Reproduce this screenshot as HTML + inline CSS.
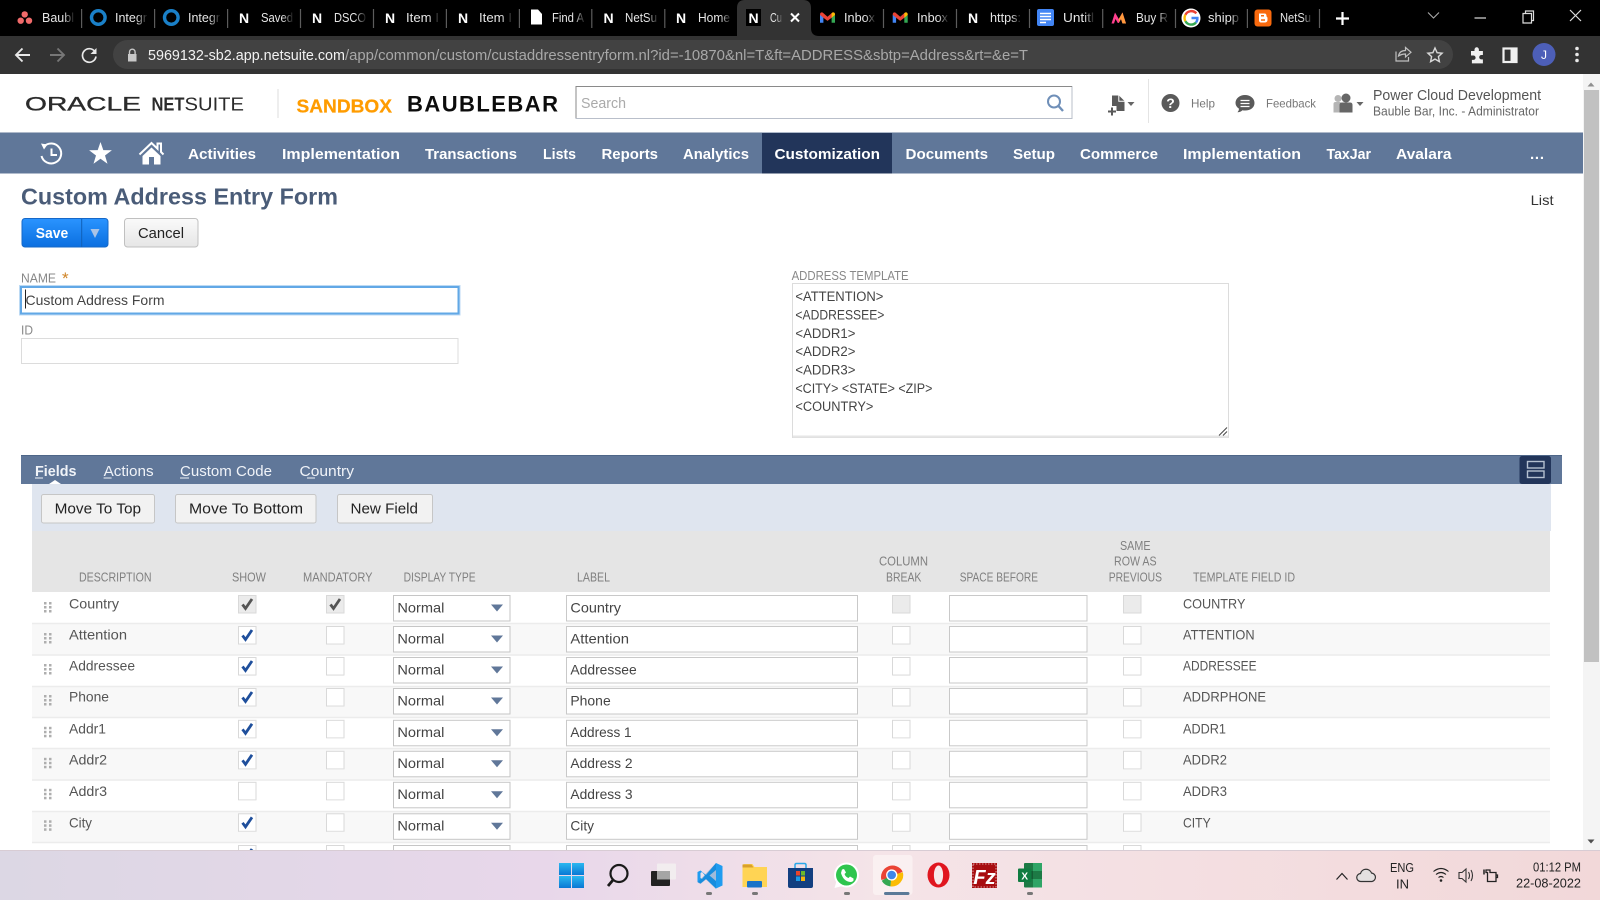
<!DOCTYPE html>
<html lang="en">
<head>
<meta charset="utf-8">
<title>Custom Address Entry Form</title>
<style>
html,body{margin:0;padding:0;width:1600px;height:900px;overflow:hidden;background:#fff}
svg{display:block}
text{font-family:"Liberation Sans",sans-serif;white-space:pre}
.tab{font-size:13px;fill:#e6e6e6}
.n{font-size:14px;font-weight:700;fill:#fff;text-anchor:middle}
.nav{font-size:15px;font-weight:700;fill:#fff}
.h{font-size:12.5px;fill:#808080}
.d{font-size:14px;fill:#555}
.v{font-size:14px;fill:#444}
.ta{font-size:13.5px;fill:#444}
.st{font-size:15px;fill:#f0f3f8}
.b{font-size:15px;fill:#222}
.tr{font-size:12.5px;fill:#222}
</style>
</head>
<body>
<svg xmlns="http://www.w3.org/2000/svg" width="1600" height="900" viewBox="0 0 1600 900">
<defs>
<linearGradient id="fade"><stop offset="0" stop-color="#000" stop-opacity="0"/><stop offset="1" stop-color="#000"/></linearGradient>
<linearGradient id="fadeA"><stop offset="0" stop-color="#333" stop-opacity="0"/><stop offset="1" stop-color="#333"/></linearGradient>
<linearGradient id="tb" x1="0" x2="1" y1="0" y2="0"><stop offset="0" stop-color="#dcd7e4"/><stop offset=".34" stop-color="#e8d7ea"/><stop offset=".55" stop-color="#f5e4e8"/><stop offset="1" stop-color="#f2d8d9"/></linearGradient>
<linearGradient id="sv" x1="0" x2="0" y1="0" y2="1"><stop offset="0" stop-color="#2a94ff"/><stop offset="1" stop-color="#0b6fe0"/></linearGradient>
<linearGradient id="cn" x1="0" x2="0" y1="0" y2="1"><stop offset="0" stop-color="#fafafa"/><stop offset="1" stop-color="#e6e6e6"/></linearGradient>
<linearGradient id="win" x1="0" x2="0" y1="0" y2="1"><stop offset="0" stop-color="#2ab8f0"/><stop offset="1" stop-color="#0a78d4"/></linearGradient>
<clipPath id="pg"><rect x="0" y="74" width="1600" height="776"/></clipPath>
<g id="cb"><rect x=".5" y=".5" width="17.5" height="17.5" fill="#fff" stroke="#d9d9d9"/><path d="M1 18.2h17" stroke="#e4e4e4"/></g>
<g id="cbd"><rect x=".5" y=".5" width="17.5" height="17.5" fill="#ebebeb" stroke="#d9d9d9"/></g>
<path id="ck" d="M4.5 9.5l3 4 6.5-9.5" fill="none" stroke-width="2.8"/>
<g id="dots" fill="#aeaeae"><rect x="44" y="0" width="2.5" height="2.5"/><rect x="49" y="0" width="2.5" height="2.5"/><rect x="44" y="4" width="2.5" height="2.5"/><rect x="49" y="4" width="2.5" height="2.5"/><rect x="44" y="8" width="2.5" height="2.5"/><rect x="49" y="8" width="2.5" height="2.5"/></g>
<g id="row">
<use href="#dots" y="7"/>
<rect x="393.5" y=".5" width="116.5" height="25.5" fill="#fff" stroke="#c6c6c6"/>
<path d="M491 9.5h12l-6 7z" fill="#607799"/>
<rect x="566.5" y=".5" width="291" height="25.5" fill="#fff" stroke="#c9c9c9"/>
<rect x="949.5" y=".5" width="137.5" height="25.5" fill="#fff" stroke="#c9c9c9"/>
<text class="v" x="397.4" y="17.4" textLength="47" lengthAdjust="spacingAndGlyphs">Normal</text>
</g>
</defs>

<!-- chrome -->
<rect width="1600" height="36" fill="#000"/>
<rect y="36" width="1600" height="38" fill="#333"/>
<path d="M737 36V8q0-8 8-8h58q8 0 8 8v20q0 8 8 8z" fill="#333"/>
<rect x="113" y="40" width="1340" height="29" rx="14.5" fill="#424242"/>
<g stroke="#5c5c5c" stroke-width="1.2">
<path d="M81.6 9v19M154.6 9v19M227.6 9v19M300.5 9v19M373.5 9v19M446.4 9v19M519.4 9v19M591.8 9v19M664.8 9v19M883.5 9v19M956.5 9v19M1029.5 9v19M1102.7 9v19M1175.5 9v19M1247.4 9v19M1319.5 9v19"/>
</g>
<g fill="#f06a6a"><circle cx="24.7" cy="14.4" r="3.2"/><circle cx="20.7" cy="20.7" r="3.2"/><circle cx="29" cy="20.7" r="3.2"/></g>
<circle cx="98.3" cy="17.5" r="6.8" fill="none" stroke="#1a80c8" stroke-width="3.4"/>
<circle cx="171.3" cy="17.5" r="6.8" fill="none" stroke="#1a80c8" stroke-width="3.4"/>
<text class="n" x="244" y="23">N</text>
<text class="n" x="317" y="23">N</text>
<text class="n" x="390" y="23">N</text>
<text class="n" x="463" y="23">N</text>
<path d="M531 9.5h7l4 4.5v10.5h-11z" fill="#fff"/>
<text class="n" x="608.5" y="23">N</text>
<text class="n" x="681" y="23">N</text>
<rect x="746" y="9" width="15" height="17" fill="#000"/>
<text class="n" x="753.5" y="23">N</text>
<text class="n" x="973" y="23">N</text>
<g class="tabs">
<text class="tab" x="42" y="22" textLength="32" lengthAdjust="spacingAndGlyphs">Baubl</text>
<text class="tab" x="115" y="22" textLength="32" lengthAdjust="spacingAndGlyphs">Integr</text>
<text class="tab" x="188" y="22" textLength="32" lengthAdjust="spacingAndGlyphs">Integr</text>
<text class="tab" x="261" y="22" textLength="32" lengthAdjust="spacingAndGlyphs">Saved</text>
<text class="tab" x="334" y="22" textLength="32" lengthAdjust="spacingAndGlyphs">DSCO</text>
<text class="tab" x="406" y="22" textLength="33" lengthAdjust="spacingAndGlyphs">Item I</text>
<text class="tab" x="479" y="22" textLength="33" lengthAdjust="spacingAndGlyphs">Item I</text>
<text class="tab" x="552" y="22" textLength="32" lengthAdjust="spacingAndGlyphs">Find A</text>
<text class="tab" x="625" y="22" textLength="32" lengthAdjust="spacingAndGlyphs">NetSu</text>
<text class="tab" x="698" y="22" textLength="32" lengthAdjust="spacingAndGlyphs">Home</text>
<text class="tab" x="844" y="22" textLength="31" lengthAdjust="spacingAndGlyphs">Inbox</text>
<text class="tab" x="917" y="22" textLength="31" lengthAdjust="spacingAndGlyphs">Inbox</text>
<text class="tab" x="990" y="22" textLength="31" lengthAdjust="spacingAndGlyphs">https:</text>
<text class="tab" x="1063" y="22" textLength="31" lengthAdjust="spacingAndGlyphs">Untitl</text>
<text class="tab" x="1136" y="22" textLength="32" lengthAdjust="spacingAndGlyphs">Buy R</text>
<text class="tab" x="1208" y="22" textLength="31" lengthAdjust="spacingAndGlyphs">shipp</text>
<text class="tab" x="1280" y="22" textLength="31" lengthAdjust="spacingAndGlyphs">NetSu</text>
</g>
<g fill="url(#fade)">
<rect x="63" y="8" width="12" height="20"/><rect x="136" y="8" width="12" height="20"/><rect x="209" y="8" width="12" height="20"/><rect x="282" y="8" width="12" height="20"/><rect x="355" y="8" width="12" height="20"/><rect x="428" y="8" width="12" height="20"/><rect x="501" y="8" width="12" height="20"/><rect x="574" y="8" width="12" height="20"/><rect x="647" y="8" width="12" height="20"/><rect x="720" y="8" width="12" height="20"/><rect x="865" y="8" width="11" height="20"/><rect x="938" y="8" width="11" height="20"/><rect x="1011" y="8" width="11" height="20"/><rect x="1084" y="8" width="11" height="20"/><rect x="1158" y="8" width="11" height="20"/><rect x="1230" y="8" width="11" height="20"/><rect x="1302" y="8" width="11" height="20"/>
</g>
<text class="tab" x="770" y="22" textLength="12" lengthAdjust="spacingAndGlyphs">Cu</text>
<rect x="776" y="8" width="7" height="20" fill="url(#fadeA)"/>
<path d="M791 13.5l8 8M799 13.5l-8 8" stroke="#fff" stroke-width="2"/>
<!-- gmail -->
<g transform="translate(820,11.7)"><path d="M0 3v8h3.4V5.2z" fill="#4285f4"/><path d="M15 3v8h-3.4V5.2z" fill="#34a853"/><path d="M0 3.2Q0 .2 2.6 .8L7.5 5 12.4 .8Q15 .2 15 3.2L11.6 6 7.5 9.2 3.4 6z" fill="#ea4335"/><path d="M15 3.2Q15 .2 12.4 .8L11.6 1.6v4.4z" fill="#fbbc04"/></g>
<g transform="translate(892.7,11.7)"><path d="M0 3v8h3.4V5.2z" fill="#4285f4"/><path d="M15 3v8h-3.4V5.2z" fill="#34a853"/><path d="M0 3.2Q0 .2 2.6 .8L7.5 5 12.4 .8Q15 .2 15 3.2L11.6 6 7.5 9.2 3.4 6z" fill="#ea4335"/><path d="M15 3.2Q15 .2 12.4 .8L11.6 1.6v4.4z" fill="#fbbc04"/></g>
<!-- docs -->
<rect x="1037" y="9" width="17" height="17" rx="2" fill="#4285f4"/>
<path d="M1040 13.5h11M1040 16.5h11M1040 19.5h11M1040 22.5h6" stroke="#fff" stroke-width="1.5"/>
<!-- myntra -->
<path d="M1111.500 23.500l3.500-11 3.800 6.500 3.700-6.500 3.500 11h-3.500l-1.500-4.500-2.200 4h-1l-2.300-4-1.500 4.500z" fill="#ff3f8e"/><path d="M1118.800 19l3.700-6.500 3.500 11h-3.500l-1.500-4.500-2 3.500z" fill="#ff9a3c"/>
<!-- google -->
<circle cx="1191" cy="18" r="9.5" fill="#fff"/>
<g fill="none" stroke-width="2.4"><path d="M1196.3 13.4A6.6 6.6 0 0 0 1185.4 14.8" stroke="#ea4335"/><path d="M1185.4 14.8A6.6 6.6 0 0 0 1185.4 21.2" stroke="#fbbc04"/><path d="M1185.4 21.2A6.6 6.6 0 0 0 1196 22.5" stroke="#34a853"/><path d="M1196 22.5A6.6 6.6 0 0 0 1197.4 18H1191.5" stroke="#4285f4"/></g>
<!-- blogger -->
<rect x="1254.5" y="9.5" width="17" height="17" rx="3" fill="#f96a0e"/>
<path d="M1259 13.5h5.5q2 0 2 2.5 0 1 1 1.500v2.500q0 2.500-3 2.500h-3.500q-2 0-2-2.500z" fill="#fff"/><path d="M1261 15.800h3M1261 20h4" stroke="#f96a0e" stroke-width="1.500"/>
<!-- plus and window controls -->
<path d="M1342.500 12v13M1336 18.500h13" stroke="#fff" stroke-width="2.200"/>
<path d="M1428 12.500l5.500 5.500 5.500-5.500" fill="none" stroke="#aaa" stroke-width="1.100"/>
<path d="M1474.500 18h11.500" stroke="#ddd" stroke-width="1.200"/>
<path d="M1523 13.500h8.500v9.500h-8.500zM1525.500 13.500v-2.500h8v9.500h-2" fill="none" stroke="#ddd" stroke-width="1.200"/>
<path d="M1570 10l11 11M1581 10l-11 11" stroke="#ddd" stroke-width="1.200"/>
<!-- toolbar -->
<path d="M30 55H16.500M22.500 48.500L16 55l6.500 6.500" fill="none" stroke="#e8e8e8" stroke-width="1.900"/>
<path d="M50 55h13.500M57.500 48.500L64 55l-6.500 6.500" fill="none" stroke="#777" stroke-width="1.900"/>
<path d="M94.800 51.500A6.800 6.800 0 1 0 96 56.500" fill="none" stroke="#e8e8e8" stroke-width="1.700"/><path d="M96.500 48v6H90.500z" fill="#e8e8e8"/>
<path d="M128 54h8.500v7.500H128z" fill="#c8c8c8"/><path d="M129.500 54v-2a2.800 2.800 0 0 1 5.600 0v2" fill="none" stroke="#c8c8c8" stroke-width="1.400"/>
<text x="148" y="60" font-size="14.500" fill="#f2f2f2" textLength="197" lengthAdjust="spacingAndGlyphs">5969132-sb2.app.netsuite.com</text>
<text x="345" y="60" font-size="14.500" fill="#a8a8a8" textLength="683" lengthAdjust="spacingAndGlyphs">/app/common/custom/custaddressentryform.nl?id=-10870&amp;nl=T&amp;ft=ADDRESS&amp;sbtp=Address&amp;rt=&amp;e=T</text>
<path d="M1396 51.500v9.500h12.500v-4M1398.500 56q1-5.500 7-5.500V47.500l5.500 4.800-5.500 4.700v-3q-4 0-7 2z" fill="none" stroke="#c0c0c0" stroke-width="1.200"/>
<path d="M1435 48l2.100 4.700 5 .5-3.700 3.400 1 5-4.400-2.500-4.400 2.500 1-5-3.700-3.400 5-.5z" fill="none" stroke="#d8d8d8" stroke-width="1.400"/>
<path d="M1471 51h3.500v-1.500a2.200 2.200 0 0 1 4.400 0V51h4v4h-1.500a2.200 2.200 0 0 0 0 4.400h1.500v4h-11v-3.500h1.500a2.200 2.200 0 0 0 0-4.400H1471z" fill="#f0f0f0"/>
<rect x="1503.500" y="48.500" width="13" height="13.500" fill="none" stroke="#f0f0f0" stroke-width="2.200"/><rect x="1510.500" y="48" width="6.500" height="14" fill="#f0f0f0"/>
<circle cx="1544" cy="54.500" r="11.500" fill="#4d5fb8"/>
<text x="1544" y="59" font-size="12" fill="#fff" text-anchor="middle">J</text>
<g fill="#e8e8e8"><circle cx="1577" cy="48.500" r="1.800"/><circle cx="1577" cy="54.500" r="1.800"/><circle cx="1577" cy="60.500" r="1.800"/></g>

<!-- header -->
<rect y="74" width="1600" height="58" fill="#fff"/>
<text x="25" y="110.700" font-size="19" fill="#2b2b2b" stroke="#2b2b2b" stroke-width=".35" textLength="116" lengthAdjust="spacingAndGlyphs">ORACLE</text>
<text x="151.500" y="110.700" font-size="18.500" font-weight="700" fill="#2b2b2b" textLength="33" lengthAdjust="spacingAndGlyphs">NET</text>
<text x="184.500" y="110.700" font-size="18.500" fill="#2b2b2b" textLength="59.500" lengthAdjust="spacingAndGlyphs">SUITE</text>
<path d="M278 89v29" stroke="#dcdcdc"/>
<text x="296.500" y="112.500" font-size="18" font-weight="700" fill="#ff9c00" stroke="#ff9c00" stroke-width=".25" textLength="95.500" lengthAdjust="spacingAndGlyphs">SANDBOX</text>
<text x="407" y="111.300" font-size="22" font-weight="700" fill="#0c0c0c" textLength="151" lengthAdjust="spacing">BAUBLEBAR</text>
<rect x="576" y="86.500" width="496" height="32" fill="#fff" stroke="#b9bfca"/>
<path d="M576 118V86.500h496" fill="none" stroke="#8a8a8a"/>
<text x="581" y="108" font-size="15" fill="#aaa" textLength="45" lengthAdjust="spacingAndGlyphs">Search</text>
<circle cx="1054" cy="101.500" r="6" fill="none" stroke="#6f8fb8" stroke-width="2"/><path d="M1058.500 106l4.500 5" stroke="#6f8fb8" stroke-width="2.400"/>
<path d="M1112 95.500h7l5.500 5.500v10h-8v-5h-4.500z" fill="#5a5a5a"/><path d="M1118.800 95.500v5.700h5.700" fill="none" stroke="#fff"/>
<path d="M1112 107.500v8M1108 111.500h8" stroke="#5a5a5a" stroke-width="2"/>
<path d="M1127.500 102h7l-3.500 4z" fill="#666"/>
<path d="M1148.500 79v44" stroke="#e4e4e4"/>
<circle cx="1170.500" cy="103" r="9" fill="#5a5a5a"/>
<text x="1170.500" y="108" font-size="14" font-weight="700" fill="#fff" text-anchor="middle">?</text>
<text x="1191" y="107.500" font-size="12" fill="#777" textLength="24" lengthAdjust="spacingAndGlyphs">Help</text>
<path d="M1245 95c5.500 0 9.500 3.500 9.500 8s-4 7.500-9.500 7.500q-1.500 0-2.500-.3-2 2-5 2 1.500-1.500 1.500-3.500-3.500-2.300-3.500-5.700c0-4.500 4-8 9.500-8z" fill="#5a5a5a"/>
<path d="M1240.500 100.500h9M1240.500 103.500h9M1240.500 106.500h9" stroke="#fff" stroke-width="1.300"/>
<text x="1266" y="107.500" font-size="12" fill="#777" textLength="50" lengthAdjust="spacingAndGlyphs">Feedback</text>
<circle cx="1338" cy="98.500" r="3.500" fill="#b5b5b5"/><path d="M1333.500 104q0-2 2-2h5v10.500h-7z" fill="#b5b5b5"/>
<circle cx="1346" cy="98" r="4.500" fill="#666"/><path d="M1339.500 105q0-2.500 2.500-2.500h8q2.500 0 2.500 2.500v7.500h-13z" fill="#666"/>
<path d="M1356.500 102h7l-3.500 4z" fill="#666"/>
<text x="1373" y="100" font-size="14.500" fill="#555" textLength="168" lengthAdjust="spacingAndGlyphs">Power Cloud Development</text>
<text x="1373" y="115.600" font-size="12.500" fill="#666" textLength="166" lengthAdjust="spacingAndGlyphs">Bauble Bar, Inc. - Administrator</text>

<!-- nav -->
<rect y="132" width="1583" height="41.500" fill="#607799"/>
<rect y="132" width="1583" height="1" fill="#aeb9ca"/>
<rect x="762" y="133" width="130" height="40.500" fill="#22355a"/>
<path d="M44 146.500A10 10 0 1 1 41.500 156" fill="none" stroke="#fff" stroke-width="2"/><path d="M41 143.500l6.500 1-3.500 5z" fill="#fff"/><path d="M51.500 148.500v6.500h5.500" fill="none" stroke="#fff" stroke-width="2"/>
<path d="M100.500 142l2.800 8.100 8.600.2-6.900 5.200 2.500 8.200-7-4.900-7 4.900 2.500-8.200-6.900-5.200 8.600-.2z" fill="#fff"/>
<path d="M139.500 154.500l12-11.500 6 5.700V143.500h3.500v8.500l2.500 2.500" fill="none" stroke="#fff" stroke-width="2"/>
<path d="M142.500 156l9-8.500 9 8.500v8.500h-6.500V157h-5v7.500h-6.500z" fill="#fff"/>
<g>
<text class="nav" x="188" y="159" textLength="68" lengthAdjust="spacingAndGlyphs">Activities</text>
<text class="nav" x="282" y="159" textLength="118" lengthAdjust="spacingAndGlyphs">Implementation</text>
<text class="nav" x="425" y="159" textLength="92" lengthAdjust="spacingAndGlyphs">Transactions</text>
<text class="nav" x="543" y="159" textLength="33" lengthAdjust="spacingAndGlyphs">Lists</text>
<text class="nav" x="601.500" y="159" textLength="56.500" lengthAdjust="spacingAndGlyphs">Reports</text>
<text class="nav" x="683" y="159" textLength="66" lengthAdjust="spacingAndGlyphs">Analytics</text>
<text class="nav" x="774.500" y="159" textLength="105.500" lengthAdjust="spacingAndGlyphs">Customization</text>
<text class="nav" x="905.500" y="159" textLength="82.500" lengthAdjust="spacingAndGlyphs">Documents</text>
<text class="nav" x="1013" y="159" textLength="42" lengthAdjust="spacingAndGlyphs">Setup</text>
<text class="nav" x="1080" y="159" textLength="78" lengthAdjust="spacingAndGlyphs">Commerce</text>
<text class="nav" x="1183" y="159" textLength="118" lengthAdjust="spacingAndGlyphs">Implementation</text>
<text class="nav" x="1326.500" y="159" textLength="44.500" lengthAdjust="spacingAndGlyphs">TaxJar</text>
<text class="nav" x="1396" y="159" textLength="55.500" lengthAdjust="spacingAndGlyphs">Avalara</text>
<text class="nav" x="1530" y="159" textLength="14" lengthAdjust="spacing">...</text>
</g>

<!-- title + actions -->
<text x="21" y="204.500" font-size="23" font-weight="700" fill="#4a5c78" textLength="317" lengthAdjust="spacingAndGlyphs">Custom Address Entry Form</text>
<text x="1530.600" y="205" font-size="14" fill="#333" textLength="23" lengthAdjust="spacingAndGlyphs">List</text>
<rect x="22" y="218.500" width="86" height="28.500" rx="3" fill="url(#sv)" stroke="#1668c8"/>
<path d="M81.700 219v28" stroke="#1060b8"/>
<text x="35.700" y="238" font-size="15" font-weight="700" fill="#fff" textLength="32.500" lengthAdjust="spacingAndGlyphs">Save</text>
<path d="M90.500 229h9l-4.500 9z" fill="#a9c3e6"/>
<rect x="124.500" y="218.500" width="73.500" height="28.500" rx="3" fill="url(#cn)" stroke="#c0c0c0"/>
<text class="b" x="138" y="238" textLength="46" lengthAdjust="spacingAndGlyphs">Cancel</text>

<!-- left form -->
<text x="21" y="282.700" font-size="13" fill="#888" textLength="35" lengthAdjust="spacingAndGlyphs">NAME</text>
<text x="62" y="284" font-size="17" fill="#cf8325">*</text>
<rect x="21" y="287" width="437.500" height="26.500" fill="#fff" stroke="#62a8e6" stroke-width="2"/>
<rect x="19.500" y="285.500" width="440.500" height="29.500" fill="none" stroke="#bcdaf4"/>
<path d="M25.500 289.500v19" stroke="#222"/>
<text class="v" x="25.500" y="305" textLength="139" lengthAdjust="spacingAndGlyphs">Custom Address Form</text>
<text x="21" y="334.700" font-size="13" fill="#888" textLength="12" lengthAdjust="spacingAndGlyphs">ID</text>
<rect x="21.500" y="338.500" width="436.500" height="25" fill="#fff" stroke="#dcdcdc"/>

<!-- address template -->
<text x="791.600" y="279.900" font-size="13" fill="#888" textLength="117" lengthAdjust="spacingAndGlyphs">ADDRESS TEMPLATE</text>
<rect x="792.500" y="283.500" width="436" height="154" fill="#fff" stroke="#dcdcdc"/>
<path d="M793 436.500h435" stroke="#e6e6e6" stroke-width="2"/>
<text class="ta" x="795.400" y="301.200" textLength="88" lengthAdjust="spacingAndGlyphs">&lt;ATTENTION&gt;</text>
<text class="ta" x="795.400" y="319.500" textLength="89" lengthAdjust="spacingAndGlyphs">&lt;ADDRESSEE&gt;</text>
<text class="ta" x="795.400" y="337.900" textLength="60" lengthAdjust="spacingAndGlyphs">&lt;ADDR1&gt;</text>
<text class="ta" x="795.400" y="356.200" textLength="60" lengthAdjust="spacingAndGlyphs">&lt;ADDR2&gt;</text>
<text class="ta" x="795.400" y="374.500" textLength="60" lengthAdjust="spacingAndGlyphs">&lt;ADDR3&gt;</text>
<text class="ta" x="795.400" y="392.900" textLength="137" lengthAdjust="spacingAndGlyphs">&lt;CITY&gt; &lt;STATE&gt; &lt;ZIP&gt;</text>
<text class="ta" x="795.400" y="411.200" textLength="78" lengthAdjust="spacingAndGlyphs">&lt;COUNTRY&gt;</text>
<path d="M1219 435.500l8-8M1223 435.500l4-4" stroke="#444" stroke-width="1"/>

<!-- subtabs -->
<rect x="21" y="455" width="1541" height="29" fill="#607799"/>
<rect x="21" y="455" width="1541" height="1" fill="#4e6688"/>
<text class="st" x="35" y="476" font-weight="700" textLength="41.500" lengthAdjust="spacingAndGlyphs">Fields</text>
<text class="st" x="103.600" y="476" textLength="50" lengthAdjust="spacingAndGlyphs">Actions</text>
<text class="st" x="180" y="476" textLength="92" lengthAdjust="spacingAndGlyphs">Custom Code</text>
<text class="st" x="299.500" y="476" textLength="54.500" lengthAdjust="spacingAndGlyphs">Country</text>
<path d="M35 478h8M103.600 478h8M180 478h9M307 478h8" stroke="#f0f3f8" stroke-width="1"/>
<rect x="1519.500" y="456" width="31.500" height="28" rx="2.500" fill="#22355a"/>
<rect x="1527.500" y="461.500" width="16.500" height="6.500" fill="none" stroke="#b4c0d0" stroke-width="1.400"/>
<rect x="1527.500" y="471" width="16.500" height="6.500" fill="none" stroke="#b4c0d0" stroke-width="1.400"/>

<rect x="32" y="484" width="1519" height="47" fill="#dfe5ef"/>
<path d="M49 484l6-4 6 4z" fill="#fff"/>
<rect x="41.500" y="494.500" width="113" height="28.500" rx="2" fill="#f2f2f2" stroke="#c6c6c6"/>
<rect x="175.500" y="494.500" width="140.500" height="28.500" rx="2" fill="#f2f2f2" stroke="#c6c6c6"/>
<rect x="337.500" y="494.500" width="95" height="28.500" rx="2" fill="#f2f2f2" stroke="#c6c6c6"/>
<text class="b" x="54.600" y="513.500" textLength="86.500" lengthAdjust="spacingAndGlyphs">Move To Top</text>
<text class="b" x="189" y="513.500" textLength="114" lengthAdjust="spacingAndGlyphs">Move To Bottom</text>
<text class="b" x="350.500" y="513.500" textLength="67.500" lengthAdjust="spacingAndGlyphs">New Field</text>

<!-- table header -->
<rect x="32" y="531" width="1518" height="61" fill="#e5e5e5"/>
<text class="h" x="79" y="581.700" textLength="72.500" lengthAdjust="spacingAndGlyphs">DESCRIPTION</text>
<text class="h" x="232" y="581.700" textLength="34" lengthAdjust="spacingAndGlyphs">SHOW</text>
<text class="h" x="303" y="581.700" textLength="69.500" lengthAdjust="spacingAndGlyphs">MANDATORY</text>
<text class="h" x="403.600" y="581.700" textLength="72" lengthAdjust="spacingAndGlyphs">DISPLAY TYPE</text>
<text class="h" x="577" y="581.700" textLength="33" lengthAdjust="spacingAndGlyphs">LABEL</text>
<text class="h" x="879" y="565.700" textLength="49" lengthAdjust="spacingAndGlyphs">COLUMN</text>
<text class="h" x="886" y="581.700" textLength="35.400" lengthAdjust="spacingAndGlyphs">BREAK</text>
<text class="h" x="959.700" y="581.700" textLength="78.300" lengthAdjust="spacingAndGlyphs">SPACE BEFORE</text>
<text class="h" x="1120" y="549.900" textLength="30.500" lengthAdjust="spacingAndGlyphs">SAME</text>
<text class="h" x="1114" y="565.700" textLength="42.600" lengthAdjust="spacingAndGlyphs">ROW AS</text>
<text class="h" x="1108.700" y="581.700" textLength="53.300" lengthAdjust="spacingAndGlyphs">PREVIOUS</text>
<text class="h" x="1193" y="581.700" textLength="102" lengthAdjust="spacingAndGlyphs">TEMPLATE FIELD ID</text>

<!-- rows -->
<g clip-path="url(#pg)">
<rect x="32" y="592" width="1518" height="260" fill="#fff"/>
<g fill="#f8f8f8"><rect x="32" y="624" width="1518" height="31"/><rect x="32" y="686" width="1518" height="31"/><rect x="32" y="749" width="1518" height="31"/><rect x="32" y="811" width="1518" height="31"/></g>
<path d="M32 623.500h1518M32 655h1518M32 686.500h1518M32 717.500h1518M32 748.500h1518M32 780h1518M32 811.500h1518M32 842.500h1518" stroke="#ececec" stroke-width="1.400"/>

<g transform="translate(0,595)"><use href="#row"/>
<use href="#cbd" x="238"/><use href="#ck" x="238" stroke="#555"/><use href="#cbd" x="326"/><use href="#ck" x="326" stroke="#555"/><use href="#cbd" x="892"/><use href="#cbd" x="1123"/>
<text class="d" x="69" y="13.600" textLength="50" lengthAdjust="spacingAndGlyphs">Country</text><text class="v" x="570.400" y="17.400" textLength="50.600" lengthAdjust="spacingAndGlyphs">Country</text><text class="d" x="1183" y="13.600" textLength="62.400" lengthAdjust="spacingAndGlyphs">COUNTRY</text></g>

<g transform="translate(0,626)"><use href="#row"/>
<use href="#cb" x="238"/><use href="#ck" x="238" stroke="#1f4f9c"/><use href="#cb" x="326"/><use href="#cb" x="892"/><use href="#cb" x="1123"/>
<text class="d" x="69" y="13.600" textLength="58" lengthAdjust="spacingAndGlyphs">Attention</text><text class="v" x="570.400" y="17.400" textLength="58.600" lengthAdjust="spacingAndGlyphs">Attention</text><text class="d" x="1183" y="13.600" textLength="71.600" lengthAdjust="spacingAndGlyphs">ATTENTION</text></g>

<g transform="translate(0,657)"><use href="#row"/>
<use href="#cb" x="238"/><use href="#ck" x="238" stroke="#1f4f9c"/><use href="#cb" x="326"/><use href="#cb" x="892"/><use href="#cb" x="1123"/>
<text class="d" x="69" y="13.600" textLength="66" lengthAdjust="spacingAndGlyphs">Addressee</text><text class="v" x="570.400" y="17.400" textLength="66.300" lengthAdjust="spacingAndGlyphs">Addressee</text><text class="d" x="1183" y="13.600" textLength="73.600" lengthAdjust="spacingAndGlyphs">ADDRESSEE</text></g>

<g transform="translate(0,688)"><use href="#row"/>
<use href="#cb" x="238"/><use href="#ck" x="238" stroke="#1f4f9c"/><use href="#cb" x="326"/><use href="#cb" x="892"/><use href="#cb" x="1123"/>
<text class="d" x="69" y="13.600" textLength="40" lengthAdjust="spacingAndGlyphs">Phone</text><text class="v" x="570.400" y="17.400" textLength="40.300" lengthAdjust="spacingAndGlyphs">Phone</text><text class="d" x="1183" y="13.600" textLength="83" lengthAdjust="spacingAndGlyphs">ADDRPHONE</text></g>

<g transform="translate(0,719.800)"><use href="#row"/>
<use href="#cb" x="238"/><use href="#ck" x="238" stroke="#1f4f9c"/><use href="#cb" x="326"/><use href="#cb" x="892"/><use href="#cb" x="1123"/>
<text class="d" x="69" y="13.600" textLength="37" lengthAdjust="spacingAndGlyphs">Addr1</text><text class="v" x="570.400" y="17.400" textLength="61.200" lengthAdjust="spacingAndGlyphs">Address 1</text><text class="d" x="1183" y="13.600" textLength="43" lengthAdjust="spacingAndGlyphs">ADDR1</text></g>

<g transform="translate(0,750.800)"><use href="#row"/>
<use href="#cb" x="238"/><use href="#ck" x="238" stroke="#1f4f9c"/><use href="#cb" x="326"/><use href="#cb" x="892"/><use href="#cb" x="1123"/>
<text class="d" x="69" y="13.600" textLength="38" lengthAdjust="spacingAndGlyphs">Addr2</text><text class="v" x="570.400" y="17.400" textLength="62.200" lengthAdjust="spacingAndGlyphs">Address 2</text><text class="d" x="1183" y="13.600" textLength="44" lengthAdjust="spacingAndGlyphs">ADDR2</text></g>

<g transform="translate(0,781.800)"><use href="#row"/>
<use href="#cb" x="238"/><use href="#cb" x="326"/><use href="#cb" x="892"/><use href="#cb" x="1123"/>
<text class="d" x="69" y="14.300" textLength="38" lengthAdjust="spacingAndGlyphs">Addr3</text><text class="v" x="570.400" y="17.400" textLength="62.200" lengthAdjust="spacingAndGlyphs">Address 3</text><text class="d" x="1183" y="14.300" textLength="44" lengthAdjust="spacingAndGlyphs">ADDR3</text></g>

<g transform="translate(0,813.300)"><use href="#row"/>
<use href="#cb" x="238"/><use href="#ck" x="238" stroke="#1f4f9c"/><use href="#cb" x="326"/><use href="#cb" x="892"/><use href="#cb" x="1123"/>
<text class="d" x="69" y="14" textLength="23" lengthAdjust="spacingAndGlyphs">City</text><text class="v" x="570.400" y="17.400" textLength="23.600" lengthAdjust="spacingAndGlyphs">City</text><text class="d" x="1183" y="14" textLength="27.700" lengthAdjust="spacingAndGlyphs">CITY</text></g>

<g transform="translate(0,845)"><use href="#row"/>
<use href="#cb" x="238"/><use href="#ck" x="238" stroke="#1f4f9c"/><use href="#cb" x="326"/><use href="#cb" x="892"/><use href="#cb" x="1123"/>
<text class="d" x="69" y="14.300" textLength="33" lengthAdjust="spacingAndGlyphs">State</text><text class="d" x="1183" y="14.300" textLength="36" lengthAdjust="spacingAndGlyphs">STATE</text></g>
</g>

<!-- scrollbar -->
<rect x="1583" y="74" width="17" height="776" fill="#f4f4f4"/>
<rect x="1584" y="90" width="15" height="572" fill="#c1c1c1"/>
<path d="M1587.500 86.500h7l-3.500-4z" fill="#8f8f8f"/>
<path d="M1587.500 839.500h7l-3.500 4z" fill="#505050"/>

<!-- taskbar -->
<rect y="850" width="1600" height="50" fill="url(#tb)"/>
<rect y="850" width="1600" height="1" fill="#d8ccd4"/>
<g fill="url(#win)"><rect x="559" y="863" width="12" height="12"/><rect x="572" y="863" width="12" height="12"/><rect x="559" y="876" width="12" height="12"/><rect x="572" y="876" width="12" height="12"/></g>
<circle cx="619" cy="873.500" r="8.500" fill="none" stroke="#1a1a1a" stroke-width="2.200"/><path d="M613 880l-5 6" stroke="#1a1a1a" stroke-width="2.800"/>
<rect x="651" y="871" width="19" height="15" rx="1" fill="#222"/><rect x="657" y="863.500" width="19" height="16" rx="1" fill="#f2eef0" opacity=".9"/><rect x="657" y="871" width="13" height="8.500" fill="#a5a5a5"/>
<path d="M716 863l6.500 3v19.500l-6.500 3-10-9.500-5.500 4.500-3-1.500v-10l3-1.500 5.500 4.500z" fill="#1f9cf0"/><path d="M716 870l-6.500 5.500 6.500 5.500zM702 872l-1.500 1v5l1.500 1 3-3.500z" fill="#f0e2ea"/>
<path d="M716 863v26l-10-9.500-5.500 4.500-3-1.500 18.500-19.500z" fill="#0b72bd" opacity=".35"/>
<path d="M742.500 866q0-2 2-2h8l2 3h12.500v20h-24.500z" fill="#ffd454"/><path d="M742.500 864.500h9l2 3h-11z" fill="#d9a02c"/><rect x="747" y="881" width="15" height="6.500" rx="1" fill="#1a73c8"/>
<path d="M788 868h25v18q0 2-2 2h-21q-2 0-2-2z" fill="#123f80"/><path d="M795 868v-3q0-1.500 1.500-1.500h8q1.500 0 1.500 1.500v3" fill="none" stroke="#2aa8e8" stroke-width="1.500"/>
<rect x="796" y="871" width="4" height="4.500" fill="#e8452c"/><rect x="801" y="871" width="4" height="4.500" fill="#6ab82c"/><rect x="796" y="876.500" width="4" height="4.500" fill="#1a9be8"/><rect x="801" y="876.500" width="4" height="4.500" fill="#f5b50a"/>
<circle cx="846.500" cy="875" r="12.500" fill="#fff"/><path d="M834.500 888l2-7 6 5z" fill="#fff"/>
<circle cx="846.500" cy="875" r="10.500" fill="#2fc54e"/>
<path d="M842 869.500l2-.5 2 3.500-1.500 1.500q1 3 4 4l1.500-1.500 3.500 2v2q-1 1.500-3 1.500-7-.5-9.500-9z" fill="#fff"/>
<rect x="873" y="855" width="39.500" height="40" rx="3" fill="#faf0f1"/>
<g transform="translate(891.700,875)">
<path d="M-7.400 4.200A8.500 8.500 0 0 1 8.300 -2" fill="none" stroke="#ea4335" stroke-width="6"/>
<path d="M8.300 -2A8.500 8.500 0 0 1 -1 8.400" fill="none" stroke="#fbbc04" stroke-width="6"/>
<path d="M-1 8.400A8.500 8.500 0 0 1 -7.400 4.200" fill="none" stroke="#34a853" stroke-width="6"/>
<circle r="5.600" fill="#fff"/><circle r="4.300" fill="#3f86e8"/>
</g>
<ellipse cx="938.500" cy="875" rx="11" ry="12.500" fill="#e0161f"/><ellipse cx="938.500" cy="875" rx="4.600" ry="9.500" fill="#f7e9ea"/>
<rect x="972" y="863" width="25" height="25" fill="#a80d10"/>
<rect x="973" y="864" width="23" height="23" fill="none" stroke="#e8c8c8" stroke-width=".8" stroke-dasharray="1.500 1.500"/>
<text x="984.500" y="884" font-size="20" font-weight="700" font-style="italic" fill="#fff" text-anchor="middle">Fz</text>
<rect x="1024" y="863" width="18" height="24.500" rx="1" fill="#1d7a45"/><path d="M1033 863h9v8h-9zM1033 879h9v8.500h-9z" fill="#2fa566"/><path d="M1024 871h9v8h-9z" fill="#155c34"/>
<rect x="1018" y="868.500" width="13.500" height="13.500" rx="1" fill="#107c41"/>
<text x="1024.700" y="879.500" font-size="10" font-weight="700" fill="#fff" text-anchor="middle">X</text>
<g fill="#777"><rect x="706" y="892" width="6" height="3" rx="1.500"/><rect x="752" y="892" width="6" height="3" rx="1.500"/><rect x="844" y="892" width="6" height="3" rx="1.500"/><rect x="1027" y="892" width="6" height="3" rx="1.500"/></g>
<rect x="884" y="892" width="25.500" height="3" rx="1.500" fill="#5b7a98"/>

<path d="M1336.500 879.500l5.500-6 5.500 6" fill="none" stroke="#222" stroke-width="1.200"/>
<path d="M1361 881.500a4 4 0 0 1-.5-8 5.800 5.800 0 0 1 11-.5 4.300 4.300 0 0 1 .5 8.500z" fill="#e4e0e0" stroke="#333" stroke-width="1.200"/>
<text class="tr" x="1390" y="872" font-size="13" textLength="24" lengthAdjust="spacingAndGlyphs">ENG</text>
<text class="tr" x="1396" y="888.700" textLength="13" lengthAdjust="spacingAndGlyphs">IN</text>
<g fill="none" stroke="#222" stroke-width="1.100"><path d="M1433.500 871.500q7.500-6 15 0M1436 874.500q5-4 10 0M1438.500 877.500q2.500-2 5 0"/></g><circle cx="1441" cy="880.500" r="1.300" fill="#222"/>
<path d="M1459 872.500h3l4-3.500v13l-4-3.500h-3zM1468.500 872q2 3.500 0 7M1471 870q3 5.500 0 11" fill="none" stroke="#333" stroke-width="1.100"/>
<path d="M1486 870h4v2.500h6v9h-8.500v-9h-1.500zM1496 875h1.500v2.500H1496z" fill="none" stroke="#222" stroke-width="1.300"/>
<path d="M1484 869.500v5" stroke="#222" stroke-width="1.500"/>
<text class="tr" x="1533" y="871.700" textLength="48" lengthAdjust="spacingAndGlyphs">01:12 PM</text>
<text class="tr" x="1516" y="887.700" textLength="65" lengthAdjust="spacingAndGlyphs">22-08-2022</text>
</svg>
</body>
</html>
